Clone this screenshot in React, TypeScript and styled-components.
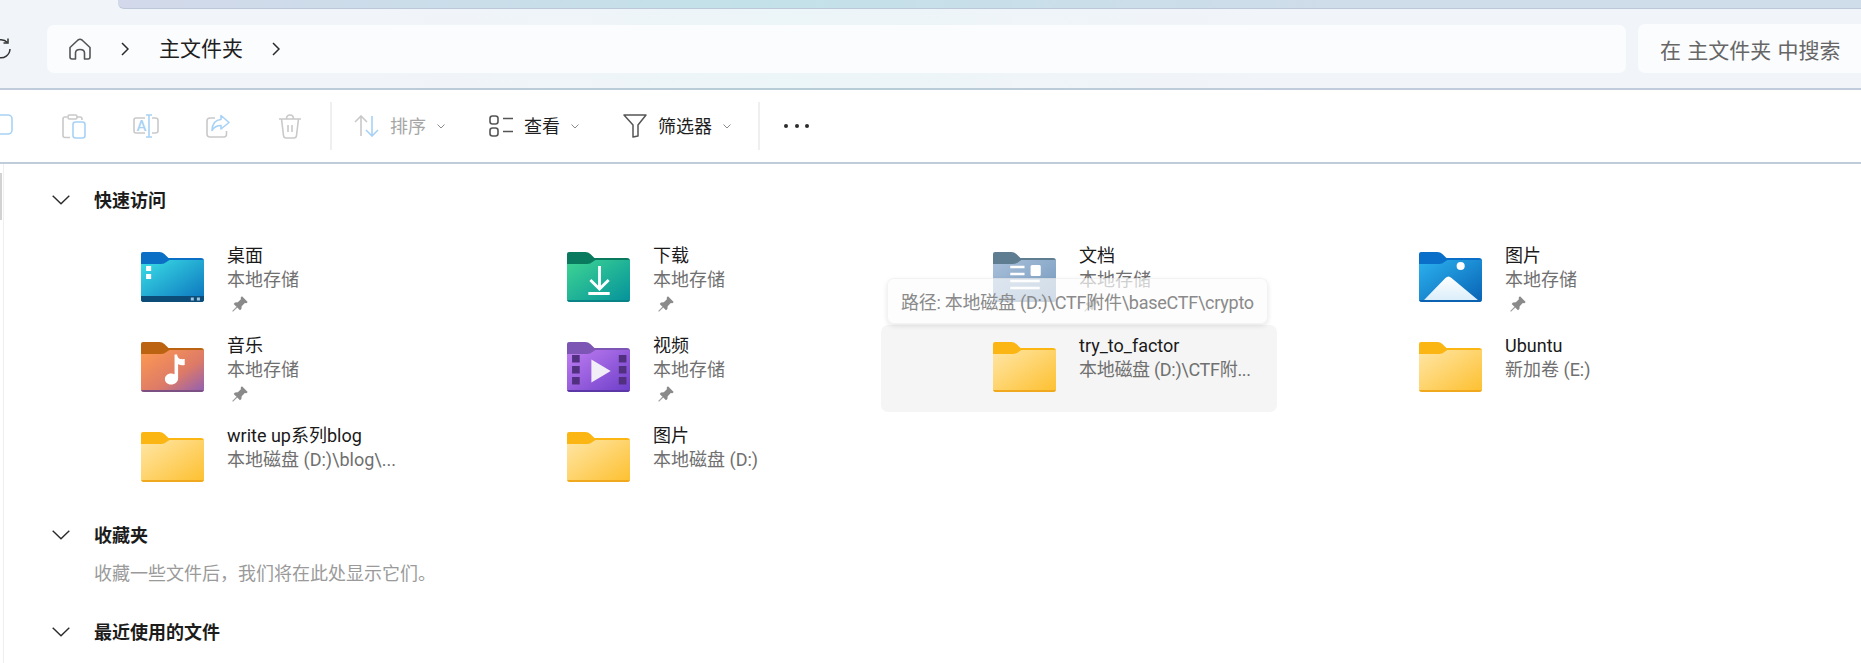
import { ReactNode } from "react";
import styled, { createGlobalStyle } from "styled-components";

const GlobalStyle = createGlobalStyle`
  html, body {
    margin: 0;
    padding: 0;
    background: #fff;
  }
  body {
    font-family: Roboto, "Noto Sans CJK SC", sans-serif;
    color: #1a1a1a;
  }
`;

const Window = styled.div`
  width: 1861px;
  height: 663px;
  overflow: hidden;
  display: flex;
  flex-direction: column;
  background: #fff;
`;

const Header = styled.header`
  height: 88px;
  flex-shrink: 0;
  background: linear-gradient(90deg, #f1f4f9 0%, #f1f4f9 20%, #ecf5f8 42%, #f1f4f9 68%, #f1f4f9 100%);
  border-bottom: 2px solid;
  border-image: linear-gradient(90deg, #c0ccdb 0%, #b7ccd6 45%, #c0ccdb 70%) 1;
`;

const TabEdge = styled.div`
  height: 8px;
  margin-left: 118px;
  border-bottom: 1px solid #bcc8d8;
  border-bottom-left-radius: 6px;
  background: linear-gradient(90deg, #d3d9ea 0%, #c3e1e9 36%, #cfdcea 70%, #cfdcea 100%);
`;

const AddressRow = styled.div`
  display: flex;
  align-items: flex-end;
  height: 64px;
`;

const RefreshSlot = styled.div`
  width: 47px;
  height: 48px;
  flex-shrink: 0;
  display: flex;
  align-items: center;
  svg {
    margin-left: -10px;
  }
`;

const AddressBar = styled.div`
  width: 1579px;
  height: 48px;
  flex-shrink: 0;
  display: flex;
  align-items: center;
  padding-left: 22px;
  box-sizing: border-box;
  border-radius: 7px;
  background: #fbfcfe;
`;

const HomeGap = styled.span`
  width: 30px;
`;

const Crumb = styled.span`
  font-size: 21px;
  line-height: 48px;
  margin: 0 29px 0 30px;
  color: #1f1f1f;
`;

const SearchBox = styled.div`
  flex: 1;
  height: 49px;
  margin-left: 12px;
  padding-left: 22px;
  display: flex;
  align-items: center;
  border-radius: 7px 0 0 7px;
  background: #fbfcfe;
  color: #666;
  font-size: 21px;
  word-spacing: 1px;
`;

const Toolbar = styled.div`
  height: 72px;
  flex-shrink: 0;
  display: flex;
  align-items: center;
  margin-left: -34px;
  border-bottom: 2px solid #c0ccda;
`;

const IconSlot = styled.div`
  width: 72px;
  height: 48px;
  flex-shrink: 0;
  display: flex;
  align-items: center;
  justify-content: center;
`;

const Separator = styled.div<{ $left: number }>`
  width: 2px;
  height: 48px;
  flex-shrink: 0;
  margin-left: ${(p) => p.$left}px;
  background: #efefef;
`;

const ToolButton = styled.div<{ $left: number; $disabled?: boolean }>`
  display: flex;
  align-items: center;
  gap: 11px;
  margin-left: ${(p) => p.$left}px;
  font-size: 18px;
  color: ${(p) => (p.$disabled ? "#a6a6a6" : "#1f1f1f")};
`;

const ToolLabel = styled.span`
  margin-top: -2px;
`;

const Dots = styled.div`
  display: flex;
  gap: 6.5px;
  margin-left: 24px;
  span {
    width: 4px;
    height: 4px;
    border-radius: 50%;
    background: #2b2b2b;
  }
`;

const Body = styled.div`
  flex: 1;
  display: flex;
  min-height: 0;
`;

const SideEdge = styled.div`
  width: 3px;
  flex-shrink: 0;
  border-right: 1px solid #efefef;
`;

const SideThumb = styled.div`
  width: 2px;
  height: 47px;
  margin-top: 9px;
  background: #d2d2d2;
`;

const Content = styled.main`
  flex: 1;
  padding-top: 24px;
`;

const SectionHead = styled.div<{ $top?: number }>`
  display: flex;
  align-items: center;
  height: 24px;
  margin-top: ${(p) => p.$top ?? 0}px;
  padding-left: 48px;
  gap: 24px;
  font-size: 18px;
  font-weight: 700;
  color: #1c1c1c;
`;

const SectionLabel = styled.span`
  margin-top: -2px;
`;

const EmptyNote = styled.p`
  margin: 15px 0 0 90px;
  font-size: 18px;
  line-height: 24px;
  color: #9a9a9a;
`;

const TileGrid = styled.div`
  display: grid;
  grid-template-columns: repeat(4, 396px);
  grid-auto-rows: 87px;
  column-gap: 30px;
  row-gap: 3px;
  margin: 23px 0 0 25px;
`;

const Tile = styled.div<{ $hover?: boolean }>`
  position: relative;
  display: flex;
  gap: 23px;
  padding: 9px 0 0 112px;
  box-sizing: border-box;
  border-radius: 7px;
  background: ${(p) => (p.$hover ? "#f5f5f5" : "transparent")};
`;

const TileIcon = styled.div`
  width: 63px;
  height: 50px;
  margin-top: 8px;
  flex-shrink: 0;
`;

const TileText = styled.div`
  display: flex;
  flex-direction: column;
  white-space: nowrap;
`;

const TileName = styled.span`
  font-size: 18px;
  line-height: 24px;
  color: #1a1a1a;
`;

const TileSub = styled.span<{ $tight?: boolean }>`
  font-size: 18px;
  line-height: 24px;
  color: #707070;
  letter-spacing: ${(p) => (p.$tight ? "-0.3px" : "normal")};
`;

const PinRow = styled.div`
  height: 22px;
  padding: 4px 0 0 5px;
`;

const Tooltip = styled.div`
  position: absolute;
  left: 6px;
  bottom: 88px;
  width: 381px;
  height: 46px;
  box-sizing: border-box;
  padding-left: 13px;
  display: flex;
  align-items: center;
  white-space: nowrap;
  font-size: 18px;
  letter-spacing: -0.25px;
  color: #8a8a8a;
  border: 1px solid rgba(0, 0, 0, 0.04);
  border-radius: 7px;
  background: rgba(252, 252, 252, 0.68);
  box-shadow: 0 2px 5px rgba(0, 0, 0, 0.1);
`;

function FolderIcon({ id, from, mid, to, tab, edge, children }: {
  id: string; from: string; mid?: string; to: string; tab: string; edge: string; children?: ReactNode;
}) {
  return (
    <svg width="63" height="50" viewBox="0 0 62 50" preserveAspectRatio="none">
      <defs>
        <linearGradient id={id} x1="0" y1="0" x2="1" y2="1">
          <stop offset="0" stopColor={from} />
          {mid && <stop offset="0.6" stopColor={mid} />}
          <stop offset="1" stopColor={to} />
        </linearGradient>
      </defs>
      <path d="M2 0H18Q21 0 23 2L27 6H59Q62 6 62 9V20H0V2Q0 0 2 0Z" fill={tab} />
      <path d="M0 12H20Q23 12 25 10L28 8H62V47Q62 50 59 50H3Q0 50 0 47Z" fill={`url(#${id})`} />
      <path d="M0 48H62V47Q62 50 59 50H3Q0 50 0 47Z" fill={edge} />
      {children}
    </svg>
  );
}

const PlainFolder = ({ id }: { id: string }) => (
  <FolderIcon id={id} from="#ffe6a6" to="#fdc02f" tab="#fbb614" edge="#f0a91f" />
);

const DesktopFolder = () => (
  <FolderIcon id="desk" from="#3bdfe6" to="#0a72bd" tab="#0b6fc6" edge="#0b4f7e">
    <path d="M0 44H62V47Q62 50 59 50H3Q0 50 0 47Z" fill="#0b4c78" />
    <rect x="5" y="14" width="5" height="5" fill="#fff" />
    <rect x="5" y="22" width="5" height="5" fill="#fff" />
    <rect x="49" y="45.500" width="3" height="3" fill="#9fc4dc" />
    <rect x="55" y="45.500" width="3" height="3" fill="#9fc4dc" />
  </FolderIcon>
);

const DownloadFolder = () => (
  <FolderIcon id="down" from="#3ed593" to="#04919b" tab="#0a7a5f" edge="#0a8387">
    <path d="M32 14V36M23 28L32 37L41 28" fill="none" stroke="#fff" strokeWidth="2.800" />
    <rect x="21" y="40" width="21" height="3" fill="#fff" />
  </FolderIcon>
);

const DocFolder = () => (
  <FolderIcon id="docs" from="#a9c0da" to="#7398bd" tab="#5f7d90" edge="#6a8cae">
    <path d="M17 15H31M17 22H31M17 29H46M17 36H46" stroke="#fff" strokeWidth="2.400" />
    <rect x="37" y="13" width="10" height="11" rx="1.500" fill="#fff" />
  </FolderIcon>
);

const PictureFolder = () => (
  <FolderIcon id="pics" from="#2cb2ef" to="#0862b4" tab="#0a6fc9" edge="#0a62b0">
    <defs>
      <linearGradient id="peak" x1="0" y1="0" x2="0" y2="1">
        <stop offset="0" stopColor="#ffffff" />
        <stop offset="1" stopColor="#dbeefa" />
      </linearGradient>
    </defs>
    <circle cx="41" cy="14" r="4" fill="#fff" />
    <path d="M5 48L26 26Q29 23 32 26L58 48Z" fill="url(#peak)" />
  </FolderIcon>
);

const MusicFolder = () => (
  <FolderIcon id="music" from="#ff9a50" mid="#dc7a68" to="#8f5fb6" tab="#bb6310" edge="#7d5084">
    <path d="M33 12.500H35.500C36 17 39 17.500 43 17V23C39.500 23.500 37.500 23 36.500 22V36C36.500 40 33.500 42.500 29.500 42.500C26 42.500 23.500 40 23.500 37C23.500 34 26 31.500 29.500 31.500C31 31.500 32 31.700 33 32.200Z" fill="#fff" />
  </FolderIcon>
);

const VideoFolder = () => (
  <FolderIcon id="video" from="#c07df2" to="#6c3ec8" tab="#7d55b5" edge="#5c37a8">
    {[13, 24, 35].map((y) => (
      <g key={y} fill="#51307f">
        <rect x="5" y={y} width="7.500" height="7.500" />
        <rect x="51" y={y} width="7.500" height="7.500" />
      </g>
    ))}
    <path d="M24 17.500L43 29L24 40.500Z" fill="#f1eef7" />
  </FolderIcon>
);

const PinIcon = () => (
  <svg width="16" height="16" viewBox="0 0 16 16">
    <path d="M10 .3L15.700 6L14.400 7.300L12.800 7.100L9.700 10.200L9.400 13L8 14.300L1.700 8L3 6.600L5.800 6.300L8.900 3.200L8.700 1.600Z" fill="#8a8a8a" />
    <path d="M5 11L.6 15.400" stroke="#9c9c9c" strokeWidth="1.100" />
  </svg>
);

const SmallChevron = () => (
  <svg width="8" height="5" viewBox="0 0 8 5">
    <path d="M.5.5L4 4L7.500.5" fill="none" stroke="#8a8a8a" strokeWidth="1" />
  </svg>
);

const SectionChevron = () => (
  <svg width="18" height="10" viewBox="0 0 18 10">
    <path d="M.7.7L9 8.800L17.300.7" fill="none" stroke="#2a2a2a" strokeWidth="1.400" />
  </svg>
);

const BarChevron = () => (
  <svg width="8" height="14" viewBox="0 0 8 14">
    <path d="M1 1L7 7L1 13" fill="none" stroke="#2a2a2a" strokeWidth="1.500" />
  </svg>
);

const gray = "#c9c9c9";
const blue = "#a8d2f5";

const ToolbarIcons = [
  <svg key="copy" width="24" height="24" viewBox="0 0 24 24" fill="none" strokeWidth="1.600">
    <path d="M5 20.500Q7 23 10 22.500" stroke={gray} />
    <rect x="5" y="1" width="17" height="19" rx="4" stroke={blue} />
  </svg>,
  <svg key="paste" width="24" height="25" viewBox="0 0 24 25" fill="none" strokeWidth="1.600">
    <path d="M8 23.500H3Q1 23.500 1 21.500V5Q1 3 3 3H5M15 3H18Q20 3 20 5V6" stroke={gray} />
    <rect x="6" y="1" width="9" height="4" rx="1.500" stroke={gray} />
    <rect x="11" y="8" width="12" height="16" rx="2.500" stroke={blue} />
  </svg>,
  <svg key="rename" width="26" height="24" viewBox="0 0 26 24" fill="none" strokeWidth="1.600">
    <path d="M12 4H3Q1 4 1 6V17Q1 19 3 19H12M19 4H22Q25 4 25 6V17Q25 19 22 19H19" stroke={gray} />
    <path d="M13 1H19M16 1V23M13 23H19" stroke={blue} />
    <text x="3.500" y="17" fontSize="15" fontWeight="500" fill={blue} stroke="none" fontFamily="Roboto, sans-serif">A</text>
  </svg>,
  <svg key="share" width="24" height="24" viewBox="0 0 24 24" fill="none" strokeWidth="1.600">
    <path d="M9 4H4Q1 4 1 7V20Q1 23 4 23H18Q20.500 23 20.500 20V17" stroke={gray} />
    <path d="M15 1.500L23 8.500L15 15V11.500Q9 11.500 6 16.500Q6.500 6 15 5.500Z" stroke={blue} strokeLinejoin="round" />
  </svg>,
  <svg key="trash" width="24" height="25" viewBox="0 0 24 25" fill="none" strokeWidth="1.600" stroke={gray}>
    <path d="M1 5H23M8.500 5Q8.500 1 12 1Q15.500 1 15.500 5M3.500 5L5.500 21.500Q5.800 24 8 24H16Q18.200 24 18.500 21.500L20.500 5M10 11V18M14 11V18" />
  </svg>,
];

type TileData = {
  name: string;
  sub: string;
  icon: ReactNode;
  pinned?: boolean;
  hover?: boolean;
  tip?: string;
};

const tiles: TileData[] = [
  { name: "桌面", sub: "本地存储", icon: <DesktopFolder />, pinned: true },
  { name: "下载", sub: "本地存储", icon: <DownloadFolder />, pinned: true },
  { name: "文档", sub: "本地存储", icon: <DocFolder />, pinned: true },
  { name: "图片", sub: "本地存储", icon: <PictureFolder />, pinned: true },
  { name: "音乐", sub: "本地存储", icon: <MusicFolder />, pinned: true },
  { name: "视频", sub: "本地存储", icon: <VideoFolder />, pinned: true },
  {
    name: "try_to_factor",
    sub: "本地磁盘 (D:)\\CTF附...",
    icon: <PlainFolder id="f1" />,
    hover: true,
    tip: "路径: 本地磁盘 (D:)\\CTF附件\\baseCTF\\crypto",
  },
  { name: "Ubuntu", sub: "新加卷 (E:)", icon: <PlainFolder id="f2" /> },
  { name: "write up系列blog", sub: "本地磁盘 (D:)\\blog\\...", icon: <PlainFolder id="f3" /> },
  { name: "图片", sub: "本地磁盘 (D:)", icon: <PlainFolder id="f4" /> },
];

export default function App() {
  return (
    <Window>
      <GlobalStyle />
      <Header>
        <TabEdge />
        <AddressRow>
          <RefreshSlot>
            <svg width="22" height="22" viewBox="0 0 22 22" fill="none" stroke="#333" strokeWidth="1.500">
              <path d="M17.500 4.500A9 9 0 1 0 20 11" />
              <path d="M18 0.500V5H13.500" />
            </svg>
          </RefreshSlot>
          <AddressBar>
            <svg width="22" height="22" viewBox="0 0 22 22" fill="none" stroke="#555" strokeWidth="1.600">
              <path d="M1 9.500L9 2Q11 .5 13 2L21 9.500V19Q21 21 19 21H15.500V15Q15.500 11.500 11 11.500Q6.500 11.500 6.500 15V21H3Q1 21 1 19Z" strokeLinejoin="round" />
            </svg>
            <HomeGap />
            <BarChevron />
            <Crumb>主文件夹</Crumb>
            <BarChevron />
          </AddressBar>
          <SearchBox>在 主文件夹 中搜索</SearchBox>
        </AddressRow>
      </Header>

      <Toolbar>
        {ToolbarIcons.map((icon, i) => (
          <IconSlot key={i}>{icon}</IconSlot>
        ))}
        <Separator $left={4} />
        <ToolButton $left={22} $disabled>
          <svg width="25" height="22" viewBox="0 0 25 22" fill="none" strokeWidth="1.600">
            <path d="M7 21V1M1 7L7 1L13 7" stroke={gray} />
            <path d="M18 1V21M12 15L18 21L24 15" stroke={blue} />
          </svg>
          <ToolLabel>排序</ToolLabel>
          <SmallChevron />
        </ToolButton>
        <ToolButton $left={44}>
          <svg width="24" height="22" viewBox="0 0 24 22" fill="none" stroke="#555" strokeWidth="1.600">
            <rect x="1" y="1" width="8" height="8" rx="2.500" />
            <rect x="1" y="13" width="8" height="8" rx="2.500" />
            <path d="M14 3.500H24M14 16.500H24" />
          </svg>
          <ToolLabel>查看</ToolLabel>
          <SmallChevron />
        </ToolButton>
        <ToolButton $left={44}>
          <svg width="24" height="24" viewBox="0 0 24 24" fill="none" stroke="#555" strokeWidth="1.500">
            <path d="M1 1H23L15 11V22L10 23V11Z" strokeLinejoin="round" />
          </svg>
          <ToolLabel>筛选器</ToolLabel>
          <SmallChevron />
        </ToolButton>
        <Separator $left={27} />
        <Dots>
          <span />
          <span />
          <span />
        </Dots>
      </Toolbar>

      <Body>
        <SideEdge>
          <SideThumb />
        </SideEdge>
        <Content>
          <SectionHead>
            <SectionChevron />
            <SectionLabel>快速访问</SectionLabel>
          </SectionHead>
          <TileGrid>
            {tiles.map((t) => (
              <Tile key={t.name + t.sub} $hover={t.hover}>
                <TileIcon>{t.icon}</TileIcon>
                <TileText>
                  <TileName>{t.name}</TileName>
                  <TileSub $tight={t.hover}>{t.sub}</TileSub>
                  {t.pinned && (
                    <PinRow>
                      <PinIcon />
                    </PinRow>
                  )}
                </TileText>
                {t.tip && <Tooltip>{t.tip}</Tooltip>}
              </Tile>
            ))}
          </TileGrid>
          <SectionHead $top={21}>
            <SectionChevron />
            <SectionLabel>收藏夹</SectionLabel>
          </SectionHead>
          <EmptyNote>收藏一些文件后，我们将在此处显示它们。</EmptyNote>
          <SectionHead $top={34}>
            <SectionChevron />
            <SectionLabel>最近使用的文件</SectionLabel>
          </SectionHead>
        </Content>
      </Body>
    </Window>
  );
}
